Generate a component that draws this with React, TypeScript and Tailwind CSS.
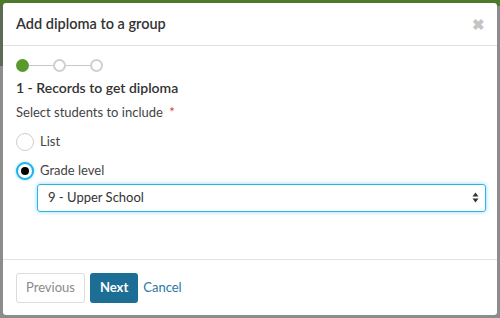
import React from "react";

export default function App() {
  return (
    <div className="w-[500px] h-[318px] bg-[#8c8c8c] relative overflow-hidden" style={{ fontFamily: 'Lato, sans-serif' }}>
      <div className="absolute left-0 top-0 w-full h-[6px] bg-[#4d7a2a]" />
      <div className="absolute left-0 top-[6px] w-[4px] h-[60px] bg-[#5d6b55]" />
      <div className="relative ml-[3px] mt-[3px] w-[494px] h-[312px] bg-white rounded-[3px] flex flex-col">
        <div className="h-[43px] border-b border-[#e2e2e2] flex items-center justify-between pl-[13px] pr-[12px]">
          <span className="text-[14.5px] font-semibold text-[#333]">Add diploma to a group</span>
          <span className="text-[#c4c4c4] text-[15px] font-bold leading-none">✖</span>
        </div>
        <div className="flex-1 pl-[13px] pr-[10px] pt-[12px]">
          <div className="flex items-center h-[14px]">
            <div className="w-[13px] h-[13px] rounded-full bg-[#5a9a2c]" />
            <div className="w-[24px] h-[1px] bg-[#c8c8c8]" />
            <div className="w-[13px] h-[13px] rounded-full border-2 border-[#cfcfcf]" />
            <div className="w-[24px] h-[1px] bg-[#c8c8c8]" />
            <div className="w-[13px] h-[13px] rounded-full border-2 border-[#cfcfcf]" />
          </div>
          <div className="mt-[5px] text-[14px] font-semibold text-[#333]">1 - Records to get diploma</div>
          <div className="mt-[5px] text-[13px] text-[#444]">
            Select students to include <span className="text-[#d33] ml-[3px]">*</span>
          </div>
          <div className="mt-[10px] flex items-center gap-[6px] h-[18px]">
            <div className="w-[18px] h-[18px] rounded-full border border-[#cfcfcf] bg-white" />
            <span className="text-[13px] text-[#444]">List</span>
          </div>
          <div className="mt-[11px] flex items-center gap-[6px] h-[18px]">
            <div className="w-[18px] h-[18px] rounded-full border-[2px] border-[#22b0e8] bg-white flex items-center justify-center shadow-[0_0_3px_#7fd4f5]">
              <div className="w-[8px] h-[8px] rounded-full bg-black" />
            </div>
            <span className="text-[13px] text-[#444]">Grade level</span>
          </div>
          <div className="mt-[4px] ml-[21px] mr-[1px] h-[28px] border border-[#2ab4ea] rounded-[3px] shadow-[0_0_4px_#8ad8f7] flex items-center justify-between pl-[10px] pr-[6px]">
            <span className="text-[13px] text-[#333]">9 - Upper School</span>
            <svg width="7" height="11" viewBox="0 0 7 11">
              <path d="M3.5 0.5 L6.5 4.5 H0.5 Z" fill="#333" />
              <path d="M3.5 10.5 L6.5 6.5 H0.5 Z" fill="#333" />
            </svg>
          </div>
        </div>
        <div className="h-[56px] border-t border-[#e2e2e2] flex items-center pl-[13px]">
          <div className="h-[30px] px-[9px] flex items-center border border-[#dcdcdc] rounded-[3px] text-[13px] text-[#8a8a8a]">Previous</div>
          <div className="ml-[5px] h-[30px] px-[10px] flex items-center rounded-[3px] bg-[#1d6e95] text-[13px] font-bold text-white">Next</div>
          <div className="ml-[5px] h-[30px] flex items-center text-[13px] text-[#2a77a6]">Cancel</div>
        </div>
      </div>
    </div>
  );
}
